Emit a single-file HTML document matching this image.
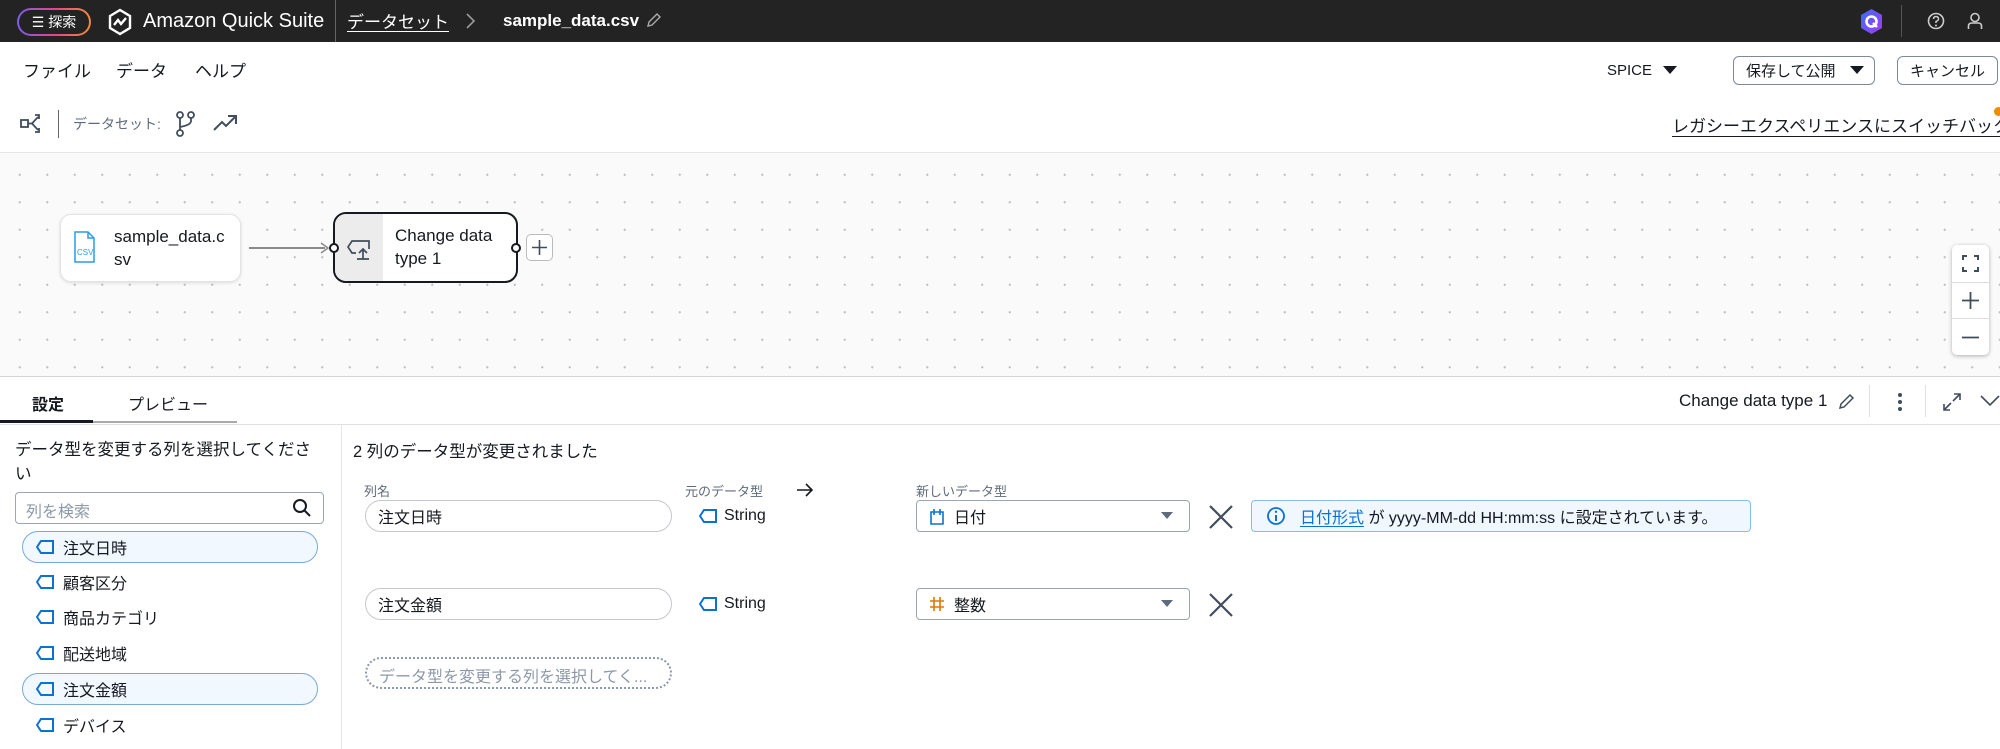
<!DOCTYPE html>
<html><head><meta charset="utf-8"><style>
*{box-sizing:border-box;margin:0;padding:0}
body{width:2000px;height:749px;overflow:hidden;background:#fff;font-family:"Liberation Sans","Noto Sans CJK JP",sans-serif;color:#16191f;position:relative}
.a{position:absolute;white-space:nowrap}
.top{left:0;top:0;width:2000px;height:42px;background:#232323}
.w{color:#fff}
.btn{border:1px solid #7d8998;border-radius:6px;background:#fff;font-size:15px;display:flex;align-items:center;justify-content:center}
.canvas{left:0;top:152px;width:2000px;height:225px;background-color:#fafafa;background-image:radial-gradient(circle,#c4c4c4 1px,transparent 1.3px);background-size:27.5px 27.5px;background-position:6px 8px;border-top:1px solid #e6e6e6;border-bottom:1px solid #d5d5d5}
.pill{border:1px solid #c6c6cd;border-radius:16px;font-size:16px;display:flex;align-items:center;padding-left:12px}
.item{left:36px;font-size:16px;display:flex;align-items:center;gap:9px;height:32px}
.sel{left:22px;width:296px;height:32px;border:1px solid #7aa9d8;border-radius:16px;background:#f1f8ff}
.lbl{font-size:13px;color:#5f6b7a}
</style></head><body>
<div class="a top"></div>
<div class="a" style="left:17px;top:8px;width:74px;height:28px;border-radius:14px;border:2px solid transparent;background:linear-gradient(#232323,#232323) padding-box,linear-gradient(90deg,#7b5cf0,#e0468a,#f08a3c) border-box;color:#fff;font-size:14px;display:flex;align-items:center;justify-content:center">☰ 探索</div>
<svg class="a" style="left:107px;top:8px" width="26" height="28" viewBox="0 0 26 28"><path d="M13 2 L23 8 V20 L13 26 L3 20 V8 Z" fill="none" stroke="#fff" stroke-width="2.4"/><path d="M7 17 L11 12 L14 16 L19 10" fill="none" stroke="#fff" stroke-width="2.4"/></svg>
<div class="a w" style="left:143px;top:10px;font-size:20px">Amazon Quick Suite</div>
<div class="a" style="left:335px;top:0;width:1px;height:42px;background:#666"></div>
<div class="a w" style="left:347px;top:8px;font-size:17px;text-decoration:underline;text-underline-offset:3px">データセット</div>
<svg class="a" style="left:465px;top:12px" width="12" height="18"><path d="M2 2 L9 9 L2 16" fill="none" stroke="#999" stroke-width="1.6"/></svg>
<div class="a w" style="left:503px;top:11px;font-size:17px;font-weight:bold">sample_data.csv</div>
<svg class="a" style="left:645px;top:12px" width="16" height="17"><path d="M3 14 L4 10 L12 2 L15 5 L7 13 Z" fill="none" stroke="#aaa" stroke-width="1.4"/></svg>
<svg class="a" style="left:1859px;top:8px" width="25" height="27" viewBox="0 0 25 27"><defs><linearGradient id="g" x1="0" y1="0" x2="1" y2="1"><stop offset="0" stop-color="#3b6cff"/><stop offset="1" stop-color="#a23cf5"/></linearGradient></defs><path d="M12.5 1 L23 7 V20 L12.5 26 L2 20 V7 Z" fill="url(#g)"/><circle cx="12.5" cy="13.5" r="5" fill="none" stroke="#fff" stroke-width="2.6"/><path d="M14 15 L18 19" stroke="#fff" stroke-width="2.6"/></svg>
<div class="a" style="left:1901px;top:5px;width:1px;height:32px;background:#555"></div>
<svg class="a" style="left:1927px;top:12px" width="18" height="18"><circle cx="9" cy="9" r="7.5" fill="none" stroke="#ccc" stroke-width="1.6"/><path d="M6.5 7 Q6.5 4.5 9 4.5 Q11.5 4.5 11.5 7 Q11.5 8.5 9 9.5 V11" fill="none" stroke="#ccc" stroke-width="1.5"/><circle cx="9" cy="13.5" r="1" fill="#ccc"/></svg>
<svg class="a" style="left:1967px;top:12px" width="16" height="18"><circle cx="8" cy="5.5" r="4" fill="none" stroke="#ccc" stroke-width="1.6"/><path d="M1.5 17 V14 Q1.5 11 5 11 H11 Q14.5 11 14.5 14 V17" fill="none" stroke="#ccc" stroke-width="1.6"/></svg>

<div class="a" style="left:23px;top:57px;font-size:17px">ファイル</div>
<div class="a" style="left:116px;top:57px;font-size:17px">データ</div>
<div class="a" style="left:195px;top:57px;font-size:17px">ヘルプ</div>
<div class="a" style="left:1607px;top:62px;font-size:15px">SPICE</div>
<svg class="a" style="left:1663px;top:66px" width="14" height="9"><path d="M0 0 H14 L7 8 Z" fill="#16191f"/></svg>
<div class="a btn" style="left:1733px;top:56px;width:142px;height:29px;justify-content:flex-start;padding-left:12px">保存して公開<svg style="margin-left:14px" width="14" height="9"><path d="M0 0 H14 L7 8 Z" fill="#16191f"/></svg></div>
<div class="a btn" style="left:1897px;top:56px;width:101px;height:29px">キャンセル</div>

<svg class="a" style="left:20px;top:113px" width="26" height="22"><rect x="1" y="7" width="7" height="7" fill="none" stroke="#414d5c" stroke-width="1.8"/><path d="M8 10.5 H12 L18 4 M12 10.5 L18 17 M15 2 H19 V6 M15 19 H19 V15" fill="none" stroke="#414d5c" stroke-width="1.8"/></svg>
<div class="a" style="left:58px;top:110px;width:1px;height:28px;background:#666"></div>
<div class="a" style="left:73px;top:114px;font-size:14px;color:#5f6b7a">データセット:</div>
<svg class="a" style="left:176px;top:111px" width="20" height="26"><circle cx="4" cy="4" r="3" fill="none" stroke="#414d5c" stroke-width="1.8"/><circle cx="15" cy="4" r="3" fill="none" stroke="#414d5c" stroke-width="1.8"/><circle cx="4" cy="22" r="3" fill="none" stroke="#414d5c" stroke-width="1.8"/><path d="M4 7 V19 M15 7 V10 Q15 14 4 16" fill="none" stroke="#414d5c" stroke-width="1.8"/></svg>
<svg class="a" style="left:213px;top:114px" width="25" height="18"><path d="M1 16 L9 8 L13 12 L22 3 M15 2 H23 V10" fill="none" stroke="#414d5c" stroke-width="2"/></svg>
<div class="a" style="left:1672px;top:112px;font-size:17px;text-decoration:underline;text-underline-offset:4px">レガシーエクスペリエンスにスイッチバック</div>
<div class="a" style="left:1994px;top:107px;width:9px;height:9px;border-radius:50%;background:#f08c00"></div>

<div class="a canvas"></div>
<div class="a" style="left:60px;top:214px;width:181px;height:68px;background:#fff;border:1px solid #e3e3e3;border-radius:11px;box-shadow:0 1px 3px rgba(0,0,0,.12)"></div>
<svg class="a" style="left:73px;top:231px" width="26" height="32"><path d="M2 1 H15 L21 7 V31 H2 Z M15 1 V7 H21" fill="none" stroke="#2f9ae0" stroke-width="1.5"/><text x="4" y="24" font-size="8" fill="#2f9ae0" font-family="Liberation Sans">CSV</text></svg>
<div class="a" style="left:114px;top:225px;font-size:17px;line-height:23px">sample_data.c<br>sv</div>
<div class="a" style="left:249px;top:247px;width:76px;height:1.5px;background:#8a8a8a"></div>
<svg class="a" style="left:320px;top:242px" width="10" height="12"><path d="M1 1 L8 6 L1 11" fill="none" stroke="#8a8a8a" stroke-width="1.5"/></svg>
<div class="a" style="left:333px;top:212px;width:185px;height:71px;background:#fff;border:2.5px solid #16191f;border-radius:13px;overflow:hidden"><div style="position:absolute;left:0;top:0;width:48px;height:100%;background:#ececec"></div></div>
<svg class="a" style="left:347px;top:237px" width="28" height="24"><path d="M9 16 H5 L1 10 L5 4 H22 V12" fill="none" stroke="#414d5c" stroke-width="1.7"/><path d="M16 22 V13 M12 16 L16 12 L20 16 M10 22 H22" fill="none" stroke="#414d5c" stroke-width="1.7"/></svg>
<div class="a" style="left:395px;top:224px;font-size:17px;line-height:23px">Change data<br>type 1</div>
<div class="a" style="left:329px;top:243px;width:10px;height:10px;border-radius:50%;border:2px solid #16191f;background:#fff"></div>
<div class="a" style="left:511px;top:243px;width:10px;height:10px;border-radius:50%;border:2px solid #16191f;background:#fff"></div>
<div class="a" style="left:526px;top:234px;width:27px;height:27px;border:1px solid #bbb;border-radius:5px;background:#fff"></div>
<svg class="a" style="left:530px;top:238px" width="19" height="19"><path d="M9.5 2 V17 M2 9.5 H17" stroke="#414d5c" stroke-width="1.6"/></svg>
<div class="a" style="left:1952px;top:245px;width:37px;height:110px;background:#fff;border-radius:5px;box-shadow:0 1px 4px rgba(0,0,0,.3)"></div>
<div class="a" style="left:1952px;top:282px;width:37px;height:1px;background:#ddd"></div>
<div class="a" style="left:1952px;top:318px;width:37px;height:1px;background:#ddd"></div>
<svg class="a" style="left:1962px;top:255px" width="17" height="17"><path d="M1 5 V1 H5 M12 1 H16 V5 M16 12 V16 H12 M5 16 H1 V12" fill="none" stroke="#414d5c" stroke-width="2"/></svg>
<svg class="a" style="left:1961px;top:291px" width="19" height="19"><path d="M9.5 1 V18 M1 9.5 H18" stroke="#414d5c" stroke-width="1.8"/></svg>
<svg class="a" style="left:1961px;top:336px" width="19" height="3"><path d="M1 1.5 H18" stroke="#414d5c" stroke-width="1.8"/></svg>

<div class="a" style="left:32px;top:391px;font-size:16px;font-weight:bold">設定</div>
<div class="a" style="left:128px;top:391px;font-size:16px">プレビュー</div>
<div class="a" style="left:0;top:424px;width:2000px;height:1px;background:#e0e0e0"></div>
<div class="a" style="left:0;top:421px;width:237px;height:2px;background:#aaa"></div>
<div class="a" style="left:0;top:420px;width:93px;height:3px;background:#16191f"></div>
<div class="a" style="left:1679px;top:391px;font-size:17px">Change data type 1</div>
<svg class="a" style="left:1838px;top:392px" width="18" height="18"><path d="M2 16 L3 12 L12 3 L15 6 L6 15 Z" fill="none" stroke="#414d5c" stroke-width="1.5"/></svg>
<div class="a" style="left:1869px;top:385px;width:1px;height:32px;background:#e0e0e0"></div>
<svg class="a" style="left:1897px;top:392px" width="6" height="20"><circle cx="3" cy="3" r="2" fill="#414d5c"/><circle cx="3" cy="10" r="2" fill="#414d5c"/><circle cx="3" cy="17" r="2" fill="#414d5c"/></svg>
<div class="a" style="left:1925px;top:385px;width:1px;height:32px;background:#e0e0e0"></div>
<svg class="a" style="left:1942px;top:392px" width="20" height="20"><path d="M12 2 H18 V8 M18 2 L11 9 M2 12 V18 H8 M2 18 L9 11" fill="none" stroke="#414d5c" stroke-width="1.6"/></svg>
<svg class="a" style="left:1980px;top:394px" width="20" height="14"><path d="M1 2 L10 11 L19 2" fill="none" stroke="#414d5c" stroke-width="1.6"/></svg>

<div class="a" style="left:341px;top:425px;width:1px;height:324px;background:#e6e6e6"></div>
<div class="a" style="left:15px;top:438px;font-size:16.5px;line-height:24px">データ型を変更する列を選択してくださ<br>い</div>
<div class="a" style="left:15px;top:492px;width:309px;height:32px;border:1px solid #9ba7b6;border-radius:4px;font-size:16px;color:#8d99a8;padding:5px 0 0 10px">列を検索</div>
<svg class="a" style="left:292px;top:498px" width="20" height="20"><circle cx="8" cy="8" r="6" fill="none" stroke="#16191f" stroke-width="2"/><path d="M12.5 12.5 L18 18" stroke="#16191f" stroke-width="2"/></svg>
<div class="a sel" style="top:531px"></div>
<div class="a sel" style="top:673px"></div>
<svg width="0" height="0" style="position:absolute"><defs><symbol id="t" viewBox="0 0 18 14"><path d="M5 1 H17 V13 H5 L1 7 Z" fill="none" stroke="#0972d3" stroke-width="2"/></symbol></defs></svg>
<div class="a item" style="top:531px"><svg width="18" height="14"><use href="#t"/></svg>注文日時</div>
<div class="a item" style="top:566px"><svg width="18" height="14"><use href="#t"/></svg>顧客区分</div>
<div class="a item" style="top:601px"><svg width="18" height="14"><use href="#t"/></svg>商品カテゴリ</div>
<div class="a item" style="top:637px"><svg width="18" height="14"><use href="#t"/></svg>配送地域</div>
<div class="a item" style="top:673px"><svg width="18" height="14"><use href="#t"/></svg>注文金額</div>
<div class="a item" style="top:709px"><svg width="18" height="14"><use href="#t"/></svg>デバイス</div>

<div class="a" style="left:353px;top:438px;font-size:16.5px">2 列のデータ型が変更されました</div>
<div class="a lbl" style="left:364px;top:481px">列名</div>
<div class="a lbl" style="left:685px;top:481px">元のデータ型</div>
<svg class="a" style="left:796px;top:483px" width="18" height="14"><path d="M1 7 H16 M10 1 L16 7 L10 13" fill="none" stroke="#16191f" stroke-width="1.6"/></svg>
<div class="a lbl" style="left:916px;top:481px">新しいデータ型</div>

<div class="a pill" style="left:365px;top:500px;width:307px;height:32px">注文日時</div>
<div class="a" style="left:699px;top:500px;height:32px;font-size:16px;display:flex;align-items:center;gap:7px"><svg width="18" height="14"><use href="#t"/></svg>String</div>
<div class="a" style="left:916px;top:500px;width:274px;height:32px;border:1px solid #9ba7b6;border-radius:4px;font-size:16px;display:flex;align-items:center;padding-left:12px;gap:9px"><svg width="16" height="17"><path d="M2 4 H14 V16 H2 Z M5 1 V7 M11 1 V7" fill="none" stroke="#0972d3" stroke-width="1.6"/></svg>日付</div>
<svg class="a" style="left:1161px;top:512px" width="12" height="8"><path d="M0 0 H12 L6 7 Z" fill="#5f6b7a"/></svg>
<svg class="a" style="left:1208px;top:504px" width="26" height="26"><path d="M2 2 L24 24 M24 2 L2 24" stroke="#414d5c" stroke-width="2.2"/></svg>
<div class="a" style="left:1251px;top:500px;width:500px;height:32px;background:#f0f7fe;border:1px solid #85bdf0;border-radius:4px;font-size:16px;display:flex;align-items:center;padding-left:14px"><svg width="20" height="20" style="margin-right:14px"><circle cx="10" cy="10" r="8" fill="none" stroke="#0972d3" stroke-width="1.8"/><path d="M10 9 V15" stroke="#0972d3" stroke-width="2"/><circle cx="10" cy="5.8" r="1.2" fill="#0972d3"/></svg><span style="color:#0972d3;text-decoration:underline;text-underline-offset:3px">日付形式</span>&nbsp;が yyyy-MM-dd HH:mm:ss に設定されています。</div>

<div class="a pill" style="left:365px;top:588px;width:307px;height:32px">注文金額</div>
<div class="a" style="left:699px;top:588px;height:32px;font-size:16px;display:flex;align-items:center;gap:7px"><svg width="18" height="14"><use href="#t"/></svg>String</div>
<div class="a" style="left:916px;top:588px;width:274px;height:32px;border:1px solid #9ba7b6;border-radius:4px;font-size:16px;display:flex;align-items:center;padding-left:12px;gap:9px"><svg width="16" height="16"><path d="M5 1 V15 M11 1 V15 M1 5 H15 M1 11 H15" stroke="#e07700" stroke-width="1.6"/></svg>整数</div>
<svg class="a" style="left:1161px;top:600px" width="12" height="8"><path d="M0 0 H12 L6 7 Z" fill="#5f6b7a"/></svg>
<svg class="a" style="left:1208px;top:592px" width="26" height="26"><path d="M2 2 L24 24 M24 2 L2 24" stroke="#414d5c" stroke-width="2.2"/></svg>

<div class="a" style="left:365px;top:657px;width:307px;height:32px;border:2px dotted #8d99a8;border-radius:16px;font-size:16px;color:#8d99a8;padding:4px 0 0 12px">データ型を変更する列を選択してく...</div>
</body></html>
